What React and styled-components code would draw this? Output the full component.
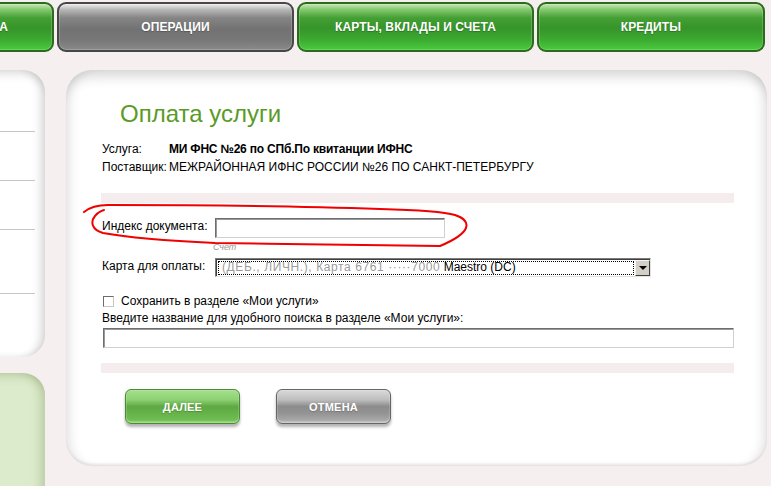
import React from "react";
import styled, { createGlobalStyle } from "styled-components";

const GlobalStyle = createGlobalStyle`
  html, body { margin: 0; padding: 0; background: #f5efef; }
  body { font-family: "Liberation Sans", Arial, sans-serif; overflow: hidden; }
`;

const Page = styled.div`
  position: relative;
  width: 771px;
  height: 486px;
  overflow: hidden;
  background: #f5efef;
`;

const Nav = styled.nav`
  display: flex;
  gap: 3px;
  margin-left: -183px;
  padding-top: 2px;
  height: 50px;
`;

const greenTab = `linear-gradient(to bottom, #c4e8b2 0%, #86c870 12%, #44a034 30%, #36942a 52%, #3ba830 76%, #4bca3e 100%)`;
const greyTab = `linear-gradient(to bottom, #eeeeee 0%, #b8b8b8 12%, #858585 30%, #727272 55%, #777777 78%, #8a8a8a 100%)`;

const Tab = styled.div`
  flex: 0 0 ${(p) => p.$w}px;
  box-sizing: border-box;
  height: 50px;
  padding-left: ${(p) => p.$shift || 0}px;
  border-radius: 9px;
  border: 2px solid ${(p) => (p.$active ? "#474747" : "#2c6a1d")};
  background: ${(p) => (p.$active ? greyTab : greenTab)};
  box-shadow: inset 0 0 0 1px rgba(255, 255, 255, 0.18);
  display: flex;
  align-items: center;
  justify-content: center;
  color: #fff;
  font-weight: bold;
  font-size: 12px;
  letter-spacing: 0.1px;
  text-shadow: 0 1px 1px rgba(0, 0, 0, 0.25);
  white-space: nowrap;
`;

const Body = styled.div`
  display: flex;
  gap: 21px;
  margin-top: 18px;
`;

const Sidebar = styled.aside`
  flex: 0 0 200px;
  margin-left: -155px;
  display: flex;
  flex-direction: column;
  gap: 16px;
`;

const MenuPanel = styled.div`
  height: 287px;
  box-sizing: border-box;
  background: #fff;
  border-radius: 0 22px 22px 0;
  padding-right: 10px;
  box-shadow: inset -11px 0 10px -7px rgba(0, 0, 0, 0.16),
    inset 0 11px 10px -7px rgba(0, 0, 0, 0.14),
    inset 0 -4px 6px -3px rgba(0, 0, 0, 0.08);
  display: flex;
  flex-direction: column;
`;

const MenuItem = styled.div`
  height: ${(p) => p.$h}px;
  flex: 0 0 auto;
  border-bottom: ${(p) => (p.$last ? "none" : "1px solid #cbc4c4")};
`;

const PromoPanel = styled.div`
  height: 200px;
  background: #dcebcb;
  border-radius: 0 22px 0 0;
  box-shadow: inset -11px 0 10px -6px rgba(90, 110, 50, 0.22),
    inset 0 10px 10px -7px rgba(90, 110, 50, 0.25);
`;

const Main = styled.main`
  position: relative;
  flex: 0 0 701px;
  height: 395px;
  box-sizing: border-box;
  background: #fff;
  border-radius: 26px;
  padding: 30px 33px 0 35px;
  box-shadow: inset 0 16px 13px -10px rgba(0, 0, 0, 0.17),
    inset 12px 0 12px -9px rgba(0, 0, 0, 0.12),
    inset -12px 0 12px -9px rgba(0, 0, 0, 0.13),
    inset 0 -3px 3px -2px rgba(0, 0, 0, 0.1),
    0 1px 1px rgba(0, 0, 0, 0.06);
  display: flex;
  flex-direction: column;
  color: #000;
`;

const Title = styled.h1`
  margin: 0 0 0 19px;
  font-size: 24px;
  line-height: 28px;
  font-weight: normal;
  color: #5a9b26;
`;

const InfoTable = styled.div`
  margin-top: 12px;
  display: grid;
  grid-template-columns: 68px auto;
  font-size: 12px;
  line-height: 18px;
`;

const InfoLabel = styled.div`
  padding-left: 1px;
`;

const InfoValue = styled.div`
  font-weight: ${(p) => (p.$bold ? "bold" : "normal")};
  letter-spacing: ${(p) => (p.$bold ? "-0.2px" : "0")};
  white-space: nowrap;
`;

const Band = styled.div`
  margin-top: ${(p) => p.$mt}px;
  height: 10px;
  background: #f5eded;
  flex: 0 0 auto;
`;

const FieldRow = styled.div`
  margin-top: ${(p) => p.$mt}px;
  display: flex;
  align-items: flex-start;
  font-size: 12px;
`;

const FieldLabel = styled.label`
  flex: 0 0 113px;
  padding-left: 1px;
  line-height: 16px;
`;

const TextInput = styled.div`
  box-sizing: border-box;
  width: ${(p) => p.$w}px;
  height: 20px;
  margin-left: ${(p) => p.$ml || 0}px;
  background: #fff;
  border: 1px solid;
  border-color: #6e6e6e #d0d0d0 #d0d0d0 #6e6e6e;
  box-shadow: inset 1px 1px 0 #9a9a9a;
`;

const Hint = styled.div`
  margin-top: 4px;
  padding-left: 112px;
  font-size: 9px;
  line-height: 10px;
  font-style: italic;
  color: #9a9a9a;
`;

const Select = styled.div`
  box-sizing: border-box;
  width: 436px;
  height: 19px;
  display: flex;
  background: #fff;
  border: 1px solid;
  border-color: #7a7a7a #e2e2e2 #e2e2e2 #7a7a7a;
  box-shadow: inset 1px 1px 0 #404040;
  padding: 1px 0 0 1px;
`;

const SelectValue = styled.div`
  flex: 1;
  margin: 1px;
  outline: 1px dotted #000;
  outline-offset: -1px;
  font-size: 12px;
  line-height: 13px;
  padding-left: 4px;
  white-space: nowrap;
  overflow: hidden;
`;

const Masked = styled.span`
  color: #9c9c9c;
  letter-spacing: 0.6px;
`;

const SelectArrow = styled.div`
  flex: 0 0 15px;
  box-sizing: border-box;
  background: #d4d0c8;
  border: 1px solid;
  border-color: #f4f4f4 #404040 #404040 #f4f4f4;
  display: flex;
  align-items: center;
  justify-content: center;

  &::after {
    content: "";
    border-left: 4px solid transparent;
    border-right: 4px solid transparent;
    border-top: 4px solid #000;
  }
`;

const CheckRow = styled.label`
  margin-top: 17px;
  display: flex;
  align-items: center;
  gap: 7px;
  padding-left: 2px;
  font-size: 12px;
  line-height: 14px;
`;

const CheckBox = styled.span`
  box-sizing: border-box;
  width: 11px;
  height: 11px;
  background: #fff;
  border: 1px solid;
  border-color: #6c6c6c #c8c8c8 #c8c8c8 #6c6c6c;
`;

const PlainLabel = styled.div`
  margin-top: 3px;
  padding-left: 1px;
  font-size: 12px;
  line-height: 14px;
`;

const Spaced = styled.div`
  margin-top: ${(p) => p.$mt}px;
`;

const Buttons = styled.div`
  margin-top: 16px;
  display: flex;
  gap: 36px;
  padding-left: 24px;
`;

const greenBtn = `linear-gradient(to bottom, #a6e08e 0%, #8bd072 30%, #5fa843 50%, #64b148 68%, #74c457 100%)`;
const greyBtn = `linear-gradient(to bottom, #dadada 0%, #bdbdbd 30%, #8c8c8c 50%, #939393 70%, #b0b0b0 100%)`;

const ActionButton = styled.button`
  box-sizing: border-box;
  width: 115px;
  height: 35px;
  border-radius: 6px;
  border: 1px solid ${(p) => (p.$kind === "primary" ? "#4a8c31" : "#666")};
  background: ${(p) => (p.$kind === "primary" ? greenBtn : greyBtn)};
  box-shadow: 0 3px 3px rgba(0, 0, 0, 0.3),
    inset 0 0 0 1px rgba(255, 255, 255, 0.15),
    inset 0 -2px 1px rgba(255, 255, 255, 0.25);
  color: #fff;
  font-family: "Liberation Sans", Arial, sans-serif;
  font-weight: bold;
  font-size: 11px;
  letter-spacing: 0.2px;
  text-shadow: 0 1px 1px rgba(0, 0, 0, 0.2);
  padding: 0;
  cursor: pointer;
`;

const Annotation = styled.svg`
  position: absolute;
  left: 0;
  top: 0;
  pointer-events: none;
`;

export default function App() {
  return (
    <>
      <GlobalStyle />
      <Page>
        <Nav>
          <Tab $w={237} $shift={16}>ГЛАВНАЯ СТРАНИЦА</Tab>
          <Tab $w={237} $active>ОПЕРАЦИИ</Tab>
          <Tab $w={237}>КАРТЫ, ВКЛАДЫ И СЧЕТА</Tab>
          <Tab $w={228}>КРЕДИТЫ</Tab>
        </Nav>
        <Body>
          <Sidebar>
            <MenuPanel>
              <MenuItem $h={61} />
              <MenuItem $h={48} />
              <MenuItem $h={48} />
              <MenuItem $h={63} />
              <MenuItem $h={60} $last />
            </MenuPanel>
            <PromoPanel />
          </Sidebar>
          <Main>
            <Title>Оплата услуги</Title>
            <InfoTable>
              <InfoLabel>Услуга:</InfoLabel>
              <InfoValue $bold>МИ ФНС №26 по СПб.По квитанции ИФНС</InfoValue>
              <InfoLabel>Поставщик:</InfoLabel>
              <InfoValue>МЕЖРАЙОННАЯ ИФНС РОССИИ №26 ПО САНКТ-ПЕТЕРБУРГУ</InfoValue>
            </InfoTable>
            <Band $mt={17} />
            <FieldRow $mt={15}>
              <FieldLabel>Индекс документа:</FieldLabel>
              <TextInput $w={230} />
            </FieldRow>
            <Hint>Счет</Hint>
            <FieldRow $mt={6}>
              <FieldLabel>Карта для оплаты:</FieldLabel>
              <Select>
                <SelectValue>
                  <Masked>(ДЕБ., ЛИЧН.), Карта 6761 ·····7000</Masked> Maestro (DC)
                </SelectValue>
                <SelectArrow />
              </Select>
            </FieldRow>
            <CheckRow>
              <CheckBox />
              Сохранить в разделе «Мои услуги»
            </CheckRow>
            <PlainLabel>Введите название для удобного поиска в разделе «Мои услуги»:</PlainLabel>
            <Spaced $mt={3}>
              <TextInput $w={631} $ml={2} />
            </Spaced>
            <Band $mt={15} />
            <Buttons>
              <ActionButton $kind="primary">ДАЛЕЕ</ActionButton>
              <ActionButton>ОТМЕНА</ActionButton>
            </Buttons>
          </Main>
        </Body>
        <Annotation width="771" height="486" viewBox="0 0 771 486">
          <path
            d="M84 212 C 90 207, 97 205, 108 205 C 180 205, 300 206, 380 209 C 420 210, 445 212, 455 215 C 464 218, 468 222, 466 228 C 463 235, 452 241, 440 246 C 400 246, 300 244, 215 243 C 170 241, 130 238, 103 233 C 92 230, 90 222, 95 216 C 98 212, 101 211, 104 210"
            fill="none"
            stroke="#f00000"
            strokeWidth="2"
            strokeLinecap="round"
            strokeLinejoin="round"
          />
        </Annotation>
      </Page>
    </>
  );
}
